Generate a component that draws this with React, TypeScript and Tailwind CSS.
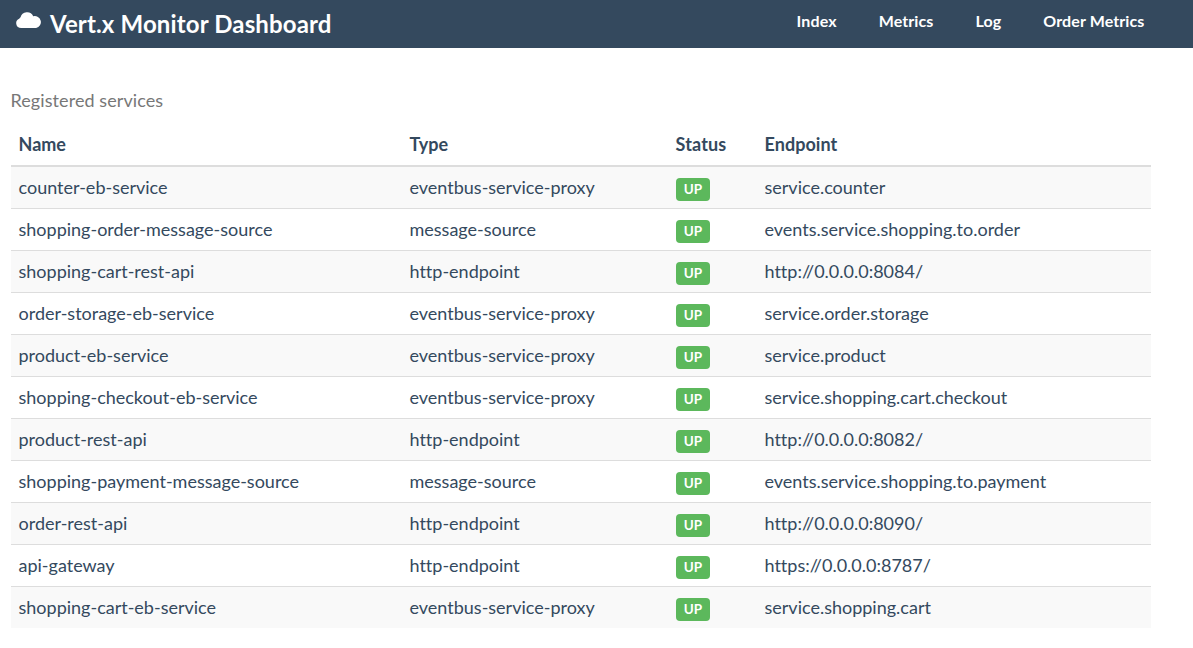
const services: [string, string, string][] = [
  ['counter-eb-service', 'eventbus-service-proxy', 'service.counter'],
  ['shopping-order-message-source', 'message-source', 'events.service.shopping.to.order'],
  ['shopping-cart-rest-api', 'http-endpoint', 'http://0.0.0.0:8084/'],
  ['order-storage-eb-service', 'eventbus-service-proxy', 'service.order.storage'],
  ['product-eb-service', 'eventbus-service-proxy', 'service.product'],
  ['shopping-checkout-eb-service', 'eventbus-service-proxy', 'service.shopping.cart.checkout'],
  ['product-rest-api', 'http-endpoint', 'http://0.0.0.0:8082/'],
  ['shopping-payment-message-source', 'message-source', 'events.service.shopping.to.payment'],
  ['order-rest-api', 'http-endpoint', 'http://0.0.0.0:8090/'],
  ['api-gateway', 'http-endpoint', 'https://0.0.0.0:8787/'],
  ['shopping-cart-eb-service', 'eventbus-service-proxy', 'service.shopping.cart'],
];

function Header() {
  return (
    <header className="flex h-12 items-start bg-[#34495e] text-white">
      <h1 className="flex items-start pl-4 text-[24px] leading-[47px] font-bold tracking-[0.14px] whitespace-nowrap">
        <svg className="mt-3 mr-2 h-4 w-[26px]" viewBox="0 0 25.2 16" preserveAspectRatio="none" fill="currentColor">
          <path d="M5 16A4.8 4.8 0 0 1 3.1 6.8 3.7 3.7 0 0 1 4.4 5.3 6.5 6.5 0 0 1 16.7 4.3 5.9 5.9 0 1 1 19.5 16z" />
        </svg>
        Vert.x Monitor Dashboard
      </h1>
      <nav className="mr-[48.5px] ml-auto flex gap-[42px] text-base leading-[42px] font-bold tracking-[0.11px] whitespace-nowrap">
        <a>Index</a>
        <a>Metrics</a>
        <a>Log</a>
        <a>Order Metrics</a>
      </nav>
    </header>
  );
}

export default function App() {
  return (
    <div className="h-[648px] overflow-hidden bg-white font-['Lato',sans-serif] text-lg text-[#34495e] [font-variant-ligatures:none]">
      <Header />
      <main className="pt-[40px] pl-[11px]">
        <table className="w-[1140px] table-fixed border-collapse text-left leading-[25px]">
          <caption className="-indent-[0.5px] pb-[9px] text-left leading-[25px] tracking-[0.08px] text-[#777]">Registered services</caption>
          <colgroup>
            <col className="w-[391px]" />
            <col className="w-[266px]" />
            <col className="w-[89px]" />
            <col />
          </colgroup>
          <thead>
            <tr className="h-[44px] border-b-2 border-[#ddd]">
              <th className="px-[7.5px] pt-[2px] font-bold">Name</th>
              <th className="px-[7.5px] pt-[2px] font-bold">Type</th>
              <th className="px-[7.5px] pt-[2px] font-bold tracking-[0.15px]">Status</th>
              <th className="px-[7.5px] pt-[2px] font-bold tracking-[0.05px]">Endpoint</th>
            </tr>
          </thead>
          <tbody>
            {services.map(([name, type, endpoint]) => (
              <tr key={name} className="h-[42px] border-t border-[#ddd] odd:bg-[#f9f9f9]">
                <td className="px-[7.5px]">{name}</td>
                <td className="px-[7.5px]">{type}</td>
                <td className="px-2">
                  <span className="mt-[5px] flex h-[23px] w-[34px] items-center justify-center rounded bg-[#5cb85c] text-[13.5px] leading-[15px] font-bold text-white">UP</span>
                </td>
                <td className="px-[7.5px]">{endpoint}</td>
              </tr>
            ))}
          </tbody>
        </table>
      </main>
    </div>
  );
}
